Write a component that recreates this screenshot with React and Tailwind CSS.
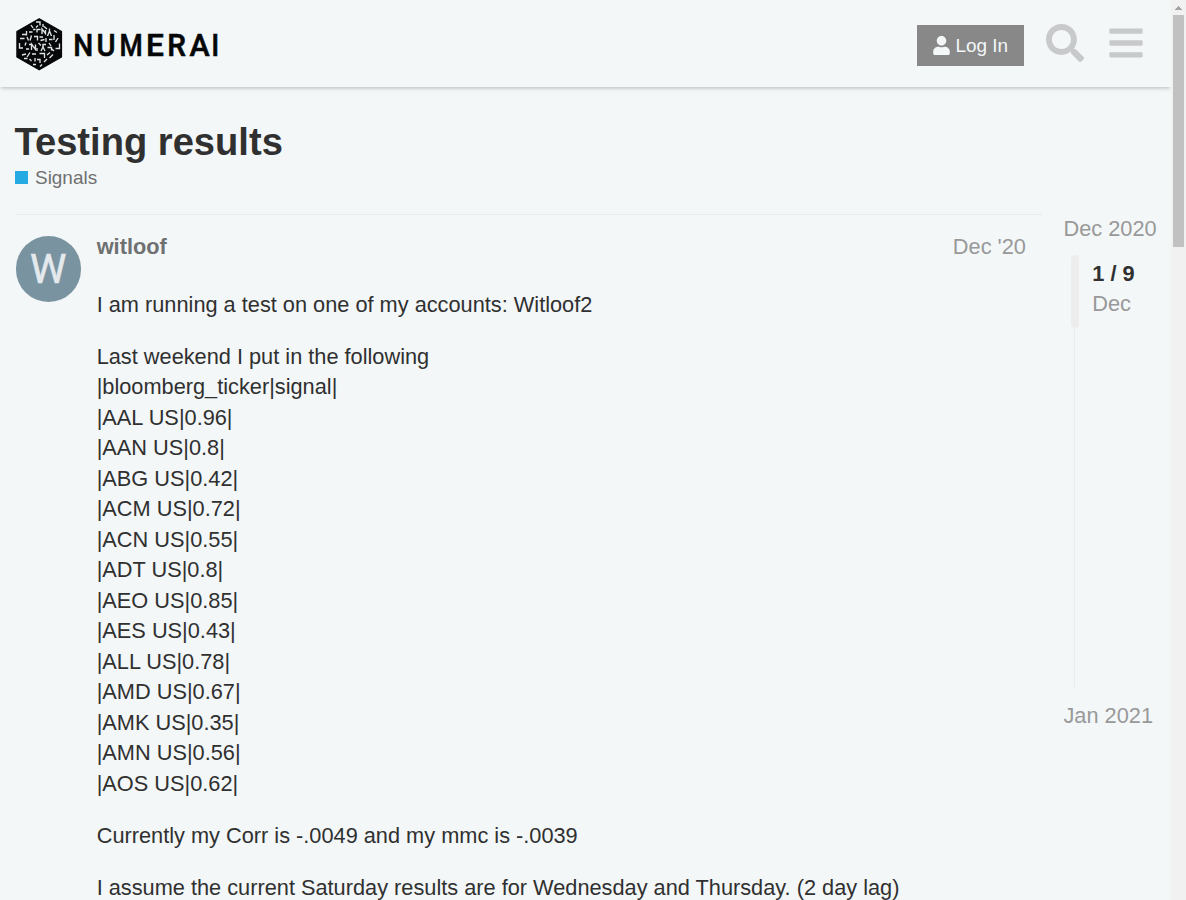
import React from "react";

const signals = [
  "|bloomberg_ticker|signal|",
  "|AAL US|0.96|",
  "|AAN US|0.8|",
  "|ABG US|0.42|",
  "|ACM US|0.72|",
  "|ACN US|0.55|",
  "|ADT US|0.8|",
  "|AEO US|0.85|",
  "|AES US|0.43|",
  "|ALL US|0.78|",
  "|AMD US|0.67|",
  "|AMK US|0.35|",
  "|AMN US|0.56|",
  "|AOS US|0.62|",
];

function Logo() {
  return (
    <svg className="block shrink-0" width="204" height="56" viewBox="15 16 204 56" role="img" aria-label="Numerai">
      <path
        d="M39.2 18.7 61.5 31.6V57L39.2 69.8 16.9 57V31.6Z"
        fill="#050708"
        stroke="#050708"
        strokeWidth="1.2"
        strokeLinejoin="round"
      />
      <g fill="none" stroke="#dfe3e4" strokeWidth="1.35">
        <path d="M36 22h4v3.500M31 25l2 3M36 27.500l2-2M43 24v3M44 26.500l3 2.500M29 32h3.500M33 29.500h2.500M37 32.500v-3h3.500M42 34v-5l3.500 4.500v-3.500M49.500 28.500v3M47.500 36l2-5 2 5M54 30.500l3 2" />
        <path d="M20 38.500h4.500M22 34.500h4.500M26.500 31v4.500M27 37l1.500 3.500M31.500 35.500l-1.500 5M34 36.500h3.500v4M39.500 37h3.500M40.500 40.500l4-1M46 38v4M49 39.500h3.500M54 35v5M58 38l-2.500 4M19.500 43v5h3.500M26 42.500l-1 3M29 44.500h3.500M31.500 50v-6l4 5.500v-5M38.500 43l2.500 2.500M46 44.500h-3v2.500M49 43l2 3M59.500 43.500v5h-4" />
        <path d="M26 49h3M37 51v-3M41 51l2-4 2 4M47.500 47.500h4v3M52 49l2 2M22 55l4-1M30 52.500l-3 4.500M32 54h4M39.500 53.500h5v4.500M47 55l3-2.500M53 54.500l-3.500 3.500M24 58.500h3.500M29.500 59l2 2M35 58v3.500M37 59.500h3v3.500M44 62l3-3M33 64.500h3M40 66.500l2-2" />
      </g>
      <g fill="#050708" fontFamily="Roboto, sans-serif" fontSize="32" fontWeight="500" stroke="#050708" strokeWidth="0.600">
        <text transform="translate(73.200 56.200) scale(.88 1)">N</text>
        <text transform="translate(96.400 56.200) scale(.91 1)">U</text>
        <text transform="translate(119.500 56.200) scale(.83 1)">M</text>
        <text transform="translate(146 56.200) scale(.99 1)">E</text>
        <text transform="translate(167.300 56.200) scale(.93 1)">R</text>
        <text transform="translate(189.400 56.200) scale(.95 1)">A</text>
        <text transform="translate(211.300 56.200) scale(.88 1)">I</text>
      </g>
    </svg>
  );
}

function Header() {
  return (
    <header className="relative z-10 flex h-[87px] shrink-0 items-center bg-[#f3f7f8] pl-[15px] pr-[28px] shadow-[0_2px_4px_-1px_rgba(0,0,0,0.25)]">
      <div className="mt-[1px]">
        <Logo />
      </div>
      <button className="ml-auto mt-1 flex h-[41px] w-[107px] items-center bg-[#888888] pl-4 text-[18.960px] text-[#f3f7f8]">
        <svg className="mr-[5.500px] shrink-0" width="17" height="19" viewBox="0 0 448 512" fill="currentColor">
          <path d="M224 256c70.700 0 128-57.300 128-128S294.700 0 224 0 96 57.300 96 128s57.300 128 128 128zm89.600 32h-16.700c-22.200 10.200-46.900 16-72.900 16s-50.600-5.800-72.900-16h-16.700C60.200 288 0 348.200 0 422.400V464c0 26.500 21.500 48 48 48h352c26.500 0 48-21.500 48-48v-41.600c0-74.200-60.200-134.400-134.400-134.400z" />
        </svg>
        <span className="whitespace-nowrap pt-[2px]">Log In</span>
      </button>
      <svg className="mb-[2px] ml-[22px] shrink-0" width="38" height="38" viewBox="0 0 512 512" fill="#c8c9ca">
        <path d="M505 442.700L405.300 343c-4.500-4.500-10.600-7-17-7H372c27.600-35.300 44-79.700 44-128C416 93.100 322.900 0 208 0S0 93.100 0 208s93.100 208 208 208c48.300 0 92.700-16.400 128-44v16.300c0 6.400 2.500 12.500 7 17l99.700 99.700c9.400 9.400 24.600 9.400 33.900 0l28.300-28.300c9.400-9.400 9.400-24.600.1-34zM208 336c-70.700 0-128-57.200-128-128 0-70.700 57.200-128 128-128 70.700 0 128 57.200 128 128 0 70.700-57.200 128-128 128z" />
      </svg>
      <svg className="mb-[2px] ml-[25px] shrink-0" width="34" height="38" viewBox="0 0 448 512" fill="#c8c9ca">
        <path d="M16 132h416c8.837 0 16-7.163 16-16V76c0-8.837-7.163-16-16-16H16C7.163 60 0 67.163 0 76v40c0 8.837 7.163 16 16 16zm0 160h416c8.837 0 16-7.163 16-16v-40c0-8.837-7.163-16-16-16H16c-8.837 0-16 7.163-16 16v40c0 8.837 7.163 16 16 16zm0 160h416c8.837 0 16-7.163 16-16v-40c0-8.837-7.163-16-16-16H16c-8.837 0-16 7.163-16 16v40c0 8.837 7.163 16 16 16z" />
      </svg>
    </header>
  );
}

function Post() {
  return (
    <article className="ml-[0.600px] flex w-[1026.400px] border-t border-[#e9ebec] pt-[21px]">
      <div className="flex h-[66px] w-[65.400px] shrink-0 items-center justify-center rounded-full bg-[#7993a0]">
        <span className="font-[Roboto,sans-serif] text-[41px] leading-none text-[#e3e9ec] [-webkit-text-stroke:0.6px_#e3e9ec]">W</span>
      </div>
      <div className="ml-[15.700px] flex-1">
        <div className="flex justify-between pr-[16px] leading-[22px]">
          <span className="font-bold text-[#6f7070]">witloof</span>
          <span className="text-[#999999]">Dec '20</span>
        </div>
        <div className="mt-[31.500px] flex flex-col gap-[21.776px] whitespace-nowrap text-[21.760px]">
          <p>I am running a test on one of my accounts: Witloof2</p>
          <div>
            <p>Last weekend I put in the following</p>
            {signals.map((row) => (
              <p key={row}>{row}</p>
            ))}
          </div>
          <p>Currently my Corr is -.0049 and my mmc is -.0039</p>
          <p>I assume the current Saturday results are for Wednesday and Thursday. (2 day lag)</p>
        </div>
      </div>
    </article>
  );
}

function Timeline() {
  return (
    <aside className="ml-[21px] whitespace-nowrap text-[#999999]">
      <div className="pl-[0.500px] leading-[30px]">Dec 2020</div>
      <div className="mt-[11px] flex h-[433px]">
        <div className="ml-2 flex w-2 flex-col items-center">
          <div className="h-[73px] w-2 shrink-0 rounded-full bg-[#ededed]" />
          <div className="mr-px w-px flex-1 bg-[#e9ebec]" />
        </div>
        <div className="ml-[13.300px] pt-1">
          <div className="font-bold text-[#303030]">1 / 9</div>
          <div>Dec</div>
        </div>
      </div>
      <div className="mt-[13px] pl-[0.500px] leading-[30px]">Jan 2021</div>
    </aside>
  );
}

function Scrollbar() {
  return (
    <div className="flex w-[15px] shrink-0 flex-col items-center bg-[#f1f1f1]">
      <svg className="shrink-0" width="15" height="15" viewBox="0 0 15 15" shapeRendering="crispEdges">
        <path d="M7 6h1v1h1v1h1v1h1v1H4V9h1V8h1V7h1z" fill="#a3a3a3" />
      </svg>
      <div className="h-[232px] w-[11px] bg-[#c1c1c1]" />
    </div>
  );
}

export default function App() {
  return (
    <div className="flex h-[900px] w-[1186px] overflow-hidden bg-[#f3f7f8] font-['Liberation_Sans',Arial,sans-serif] text-[21.776px] leading-[30.486px] text-[#303030]">
      <div className="flex w-[1171px] shrink-0 flex-col overflow-hidden">
        <Header />
        <main className="pl-[15px] pt-[32px]">
          <h1 className="-ml-[0.500px] text-[38.130px] font-bold leading-[46px]">Testing results</h1>
          <div className="flex h-[26px] items-center text-[18.960px] text-[#6f7070]">
            <span className="mb-[2px] mr-[7px] size-[13px] bg-[#25aae1]" />
            Signals
          </div>
          <div className="mt-[23px] flex items-start">
            <Post />
            <Timeline />
          </div>
        </main>
      </div>
      <Scrollbar />
    </div>
  );
}
